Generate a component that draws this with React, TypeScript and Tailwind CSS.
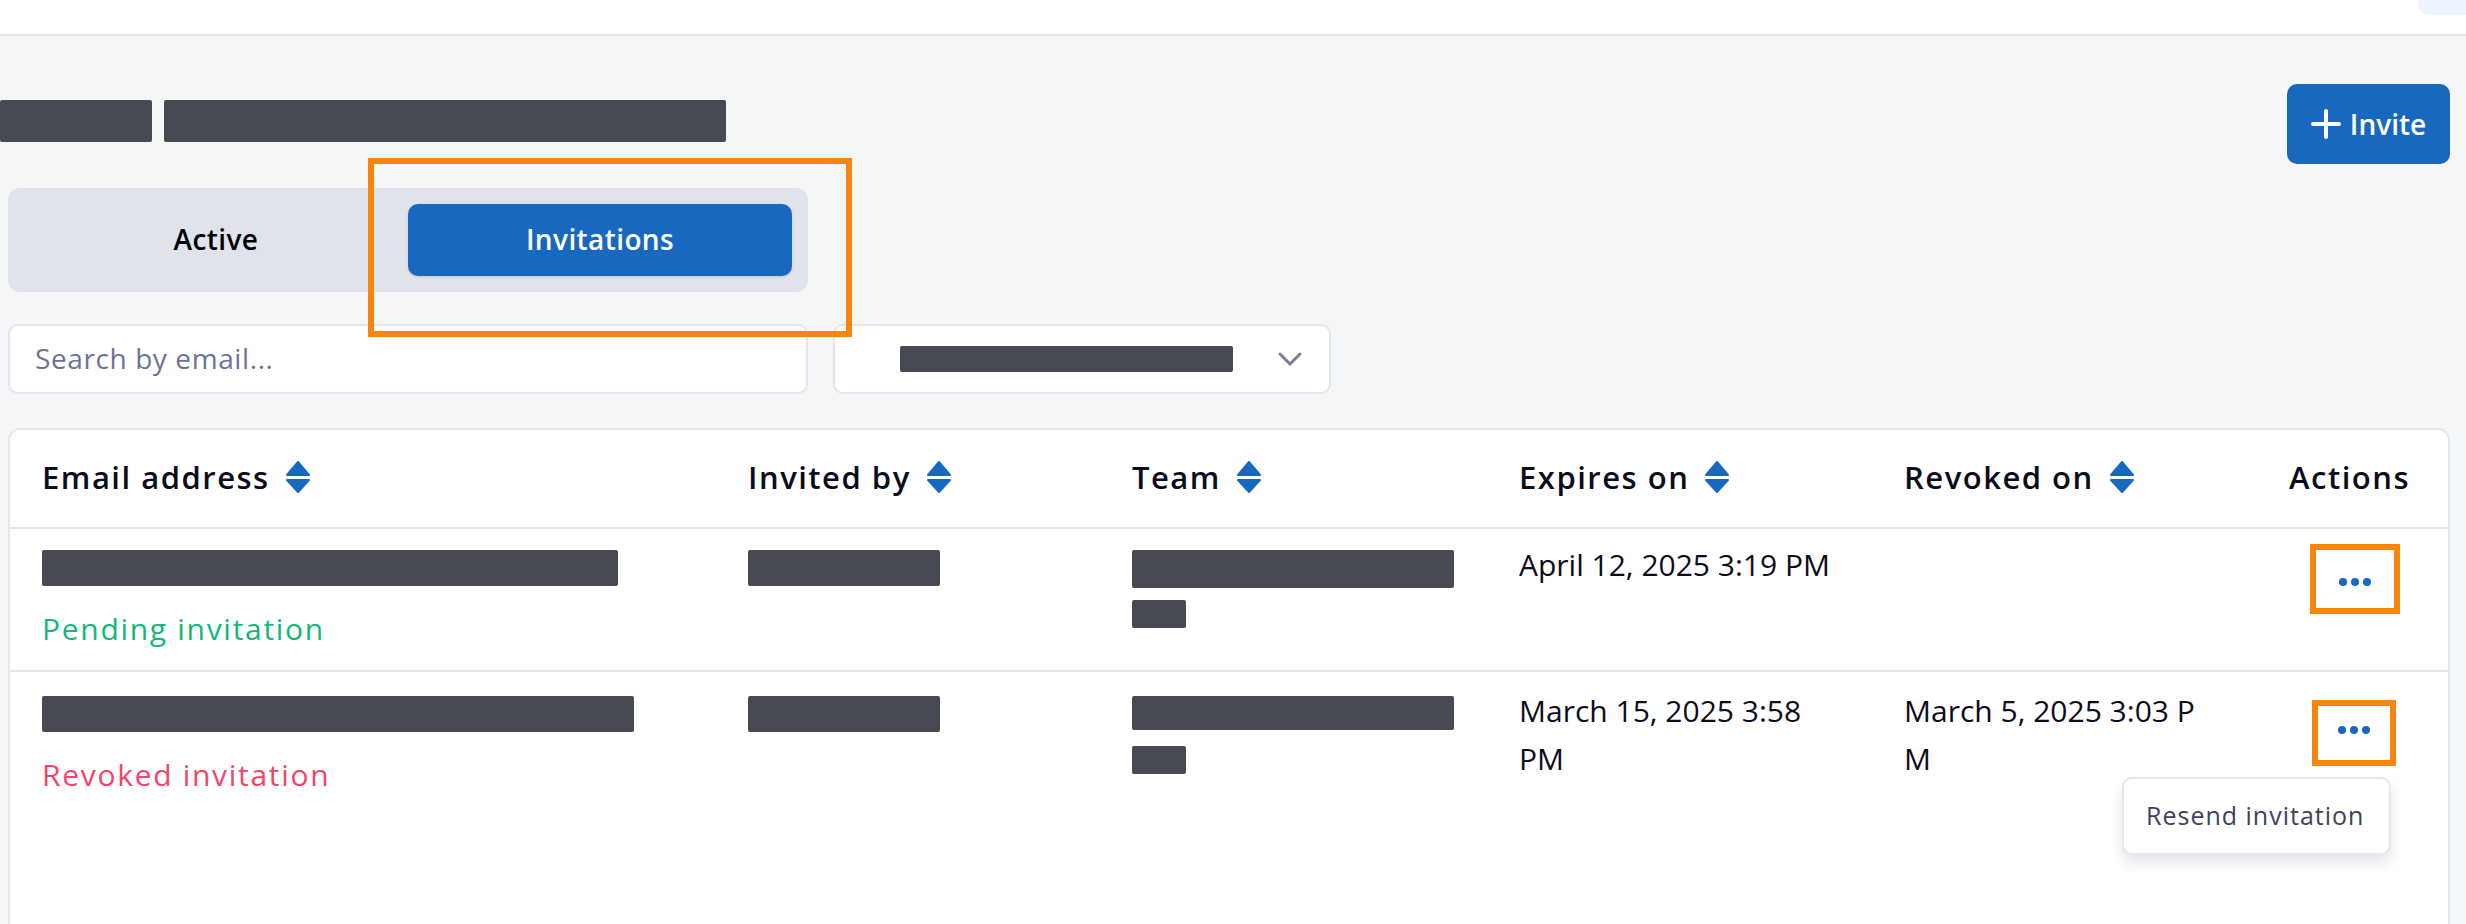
import { useState } from "react";

const Bar = ({ className }: { className: string }) => (
  <div className={`bg-[#484a53] rounded-[2px] ${className}`}></div>
);

const SortIcon = () => (
  <svg width="26" height="34" viewBox="0 0 26 34" className="ml-[15px] shrink-0">
    <path d="M13 2 L24 15 H2 Z" fill="#1868c0" stroke="#1868c0" strokeWidth="2" strokeLinejoin="round" />
    <path d="M2 20 H24 L13 32 Z" fill="#1868c0" stroke="#1868c0" strokeWidth="2" strokeLinejoin="round" />
  </svg>
);

const Dots = () => (
  <div className="flex gap-[4px]">
    <span className="w-[8px] h-[8px] rounded-full bg-[#1868c0]"></span>
    <span className="w-[8px] h-[8px] rounded-full bg-[#1868c0]"></span>
    <span className="w-[8px] h-[8px] rounded-full bg-[#1868c0]"></span>
  </div>
);

const cols = "grid grid-cols-[706px_384px_387px_385px_385px_1fr] pl-[32px]";

const App = () => {
  const [tab, setTab] = useState("invitations");

  return (
    <div className="w-full h-[924px] overflow-hidden bg-[#f5f6f8] flex flex-col font-['Open_Sans',sans-serif] text-[30px] leading-[48px] text-[#0b0c1c]">
      {/* top bar */}
      <div className="h-[36px] shrink-0 bg-white border-b-2 border-[#e2e4ec] flex justify-end items-start">
        <div className="w-[48px] h-[15px] bg-[#eef4fd] rounded-bl-[12px]"></div>
      </div>

      <div className="flex-1 flex flex-col pl-[8px] pr-[16px] pt-[48px]">
        {/* title row */}
        <div className="flex items-start justify-between">
          <div className="flex gap-[12px] -ml-[8px] mt-[16px]">
            <Bar className="w-[152px] h-[42px]" />
            <Bar className="w-[562px] h-[42px]" />
          </div>
          <button className="w-[163px] h-[80px] bg-[#1868c0] rounded-[10px] text-white text-[28px] font-semibold flex items-center justify-center gap-[9px]">
            <svg width="30" height="30" viewBox="0 0 30 30">
              <path d="M15 2 V28 M2 15 H28" stroke="white" strokeWidth="4" strokeLinecap="round" />
            </svg>
            Invite
          </button>
        </div>

        {/* tabs */}
        <div className="relative mt-[24px] w-[800px]">
          <div className="h-[104px] p-[16px] bg-[#e0e3ea] rounded-[12px] flex text-[28px] tracking-[0.4px]">
            <button
              onClick={() => setTab("active")}
              className={`flex-1 rounded-[10px] font-semibold pb-[2px] ${tab === "active" ? "bg-[#1868c0] text-white" : "text-black"}`}
            >
              Active
            </button>
            <button
              onClick={() => setTab("invitations")}
              className={`flex-1 rounded-[10px] font-semibold pb-[2px] ${tab === "invitations" ? "bg-[#1868c0] text-white shadow-sm" : "text-black"}`}
            >
              Invitations
            </button>
          </div>
          <div className="absolute left-[360px] top-[-30px] w-[484px] h-[179px] border-[6px] border-[#f7870c]"></div>
        </div>

        {/* filters */}
        <div className="flex gap-[25px] mt-[32px]">
          <input
            placeholder="Search by email..."
            className="w-[800px] h-[70px] bg-white border-2 border-[#e2e6ee] rounded-[10px] pl-[25px] pb-[2px] text-[28px] tracking-[0.6px] outline-none placeholder:text-[#6b7398]"
          />
          <div className="w-[498px] h-[70px] bg-white border-2 border-[#e2e6ee] rounded-[10px] flex items-center pl-[65px] pr-[26px] justify-between">
            <Bar className="w-[333px] h-[26px]" />
            <svg width="26" height="16" viewBox="0 0 26 16">
              <path d="M3 3 L13 13 L23 3" stroke="#7a7f92" strokeWidth="3" fill="none" strokeLinecap="round" strokeLinejoin="round" />
            </svg>
          </div>
        </div>

        {/* table card */}
        <div className="mt-[34px] flex-1 bg-white border-2 border-[#e3e7ee] rounded-t-[12px] min-h-[600px]">
          <div className={`${cols} pt-[23px] pb-[26px] border-b-2 border-[#e3e7ee] font-semibold text-[31px] tracking-[1.5px]`}>
            <div className="flex items-center">Email address<SortIcon /></div>
            <div className="flex items-center">Invited by<SortIcon /></div>
            <div className="flex items-center">Team<SortIcon /></div>
            <div className="flex items-center">Expires on<SortIcon /></div>
            <div className="flex items-center">Revoked on<SortIcon /></div>
            <div>Actions</div>
          </div>

          {/* row 1 */}
          <div className={`${cols} pt-[15px] pb-[14px] border-b-2 border-[#e3e7ee]`}>
            <div>
              <div className="h-[48px] flex items-center"><Bar className="w-[576px] h-[36px]" /></div>
              <div className="mt-[13px] mb-[3px] text-[#13b67d] tracking-[1.7px]">Pending invitation</div>
            </div>
            <div className="h-[48px] flex items-center"><Bar className="w-[192px] h-[36px]" /></div>
            <div className="pt-[6px]">
              <Bar className="w-[322px] h-[38px]" />
              <Bar className="w-[54px] h-[28px] mt-[12px]" />
            </div>
            <div className="w-[320px] -mt-[3px]">April 12, 2025 3:19 PM</div>
            <div className="w-[300px] break-all"></div>
            <div>
              <div className="ml-[21px] w-[90px] h-[70px] border-[6px] border-[#f7870c] flex items-center justify-center pt-[6px]">
                <Dots />
              </div>
            </div>
          </div>

          {/* row 2 */}
          <div className={`${cols} pt-[18px] pb-[14px]`}>
            <div>
              <div className="h-[48px] flex items-center"><Bar className="w-[592px] h-[36px]" /></div>
              <div className="mt-[13px] text-[#f2456a] tracking-[1.7px]">Revoked invitation</div>
            </div>
            <div className="h-[48px] flex items-center"><Bar className="w-[192px] h-[36px]" /></div>
            <div className="pt-[6px]">
              <Bar className="w-[322px] h-[34px]" />
              <Bar className="w-[54px] h-[28px] mt-[16px]" />
            </div>
            <div className="w-[320px] -mt-[3px]">March 15, 2025 3:58 PM</div>
            <div className="w-[300px] -mt-[3px] break-all">March 5, 2025 3:03 PM</div>
            <div>
              <div className="relative ml-[23px] mt-[10px] w-[84px] h-[66px]">
                <div className="w-full h-full border-[6px] border-[#f7870c] flex items-center justify-center pb-[6px]">
                  <Dots />
                </div>
                <div className="absolute right-[5px] top-[77px] w-[269px] h-[78px] bg-white border-2 border-[#e3e7ef] rounded-[10px] shadow-[0_8px_14px_rgba(30,40,80,0.12)] flex items-center pl-[22px] pb-[2px] text-[25px] tracking-[1px] text-[#3e4259] whitespace-nowrap">
                  Resend invitation
                </div>
              </div>
            </div>
          </div>
        </div>
      </div>
    </div>
  );
};

export default App;
